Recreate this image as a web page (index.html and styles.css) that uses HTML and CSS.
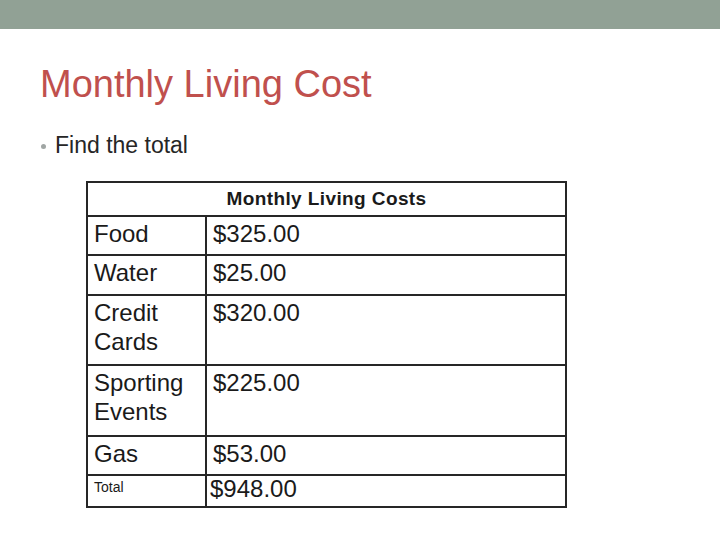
FILE: index.html
```html
<!DOCTYPE html>
<html>
<head>
<meta charset="utf-8">
<link rel="stylesheet" href="styles.css">
</head>
<body>
<div class="topbar"></div>
<h1 class="title">Monthly Living Cost</h1>
<ul class="bullets">
  <li><span class="dot"></span>Find the total</li>
</ul>
<table class="costs">
  <colgroup><col class="col1"><col class="col2"></colgroup>
  <tr class="r-head"><th colspan="2">Monthly Living Costs</th></tr>
  <tr class="r-food"><td class="c1">Food</td><td class="c2">$325.00</td></tr>
  <tr class="r-water"><td class="c1">Water</td><td class="c2">$25.00</td></tr>
  <tr class="r-credit"><td class="c1">Credit<br>Cards</td><td class="c2">$320.00</td></tr>
  <tr class="r-sport"><td class="c1">Sporting<br>Events</td><td class="c2">$225.00</td></tr>
  <tr class="r-gas"><td class="c1">Gas</td><td class="c2">$53.00</td></tr>
  <tr class="r-total"><td class="c1 small">Total</td><td class="c2 sum">$948.00</td></tr>
</table>
</body>
</html>
```
FILE: styles.css
```css
html, body {
  margin: 0;
  padding: 0;
  background: #ffffff;
}
body {
  width: 720px;
  height: 540px;
  overflow: hidden;
  font-family: "Liberation Sans", Arial, sans-serif;
}
.topbar {
  height: 29px;
  background: #91a195;
}
.title {
  margin: 36px 0 0 40px;
  font-size: 38px;
  line-height: 38px;
  font-weight: normal;
  color: #c0504d;
}
.bullets {
  list-style: none;
  margin: 31px 0 0 0;
  padding: 0 0 0 41px;
}
.bullets li {
  display: flex;
  align-items: center;
  font-size: 23px;
  line-height: 23px;
  color: #262626;
}
.dot {
  width: 5px;
  height: 5px;
  border-radius: 50%;
  background: #a0a6a4;
  margin-right: 9px;
  margin-top: 1px;
}
.costs {
  margin: 24px 0 0 86px;
  width: 481px;
  border-collapse: separate;
  border-spacing: 0;
  border-top: 2px solid #262626;
  border-left: 2px solid #262626;
  table-layout: fixed;
  color: #1a1a1a;
}
.col1 { width: 119px; }
.col2 { width: 360px; }
.costs th, .costs td {
  border-right: 2px solid #262626;
  border-bottom: 2px solid #262626;
  padding: 0;
  vertical-align: top;
  text-align: left;
}
.costs th {
  text-align: center;
  font-size: 19px;
  font-weight: bold;
  line-height: 32px;
  height: 32px;
  letter-spacing: 0.4px;
}
.costs td {
  font-size: 24px;
  line-height: 29px;
  padding-top: 2px;
  padding-left: 6px;
}
.r-food td { height: 35px; }
.r-water td { height: 36px; }
.r-credit td { height: 66px; }
.r-sport td { height: 67px; }
.r-gas td { height: 35px; }
.costs .r-total td { height: 30px; padding-top: 0; }
.costs .r-total td.small {
  font-size: 14px;
  line-height: 16px;
  padding-top: 3px;
  height: 27px;
}
.costs .r-total td.sum {
  line-height: 26px;
  padding-left: 3px;
}
```
